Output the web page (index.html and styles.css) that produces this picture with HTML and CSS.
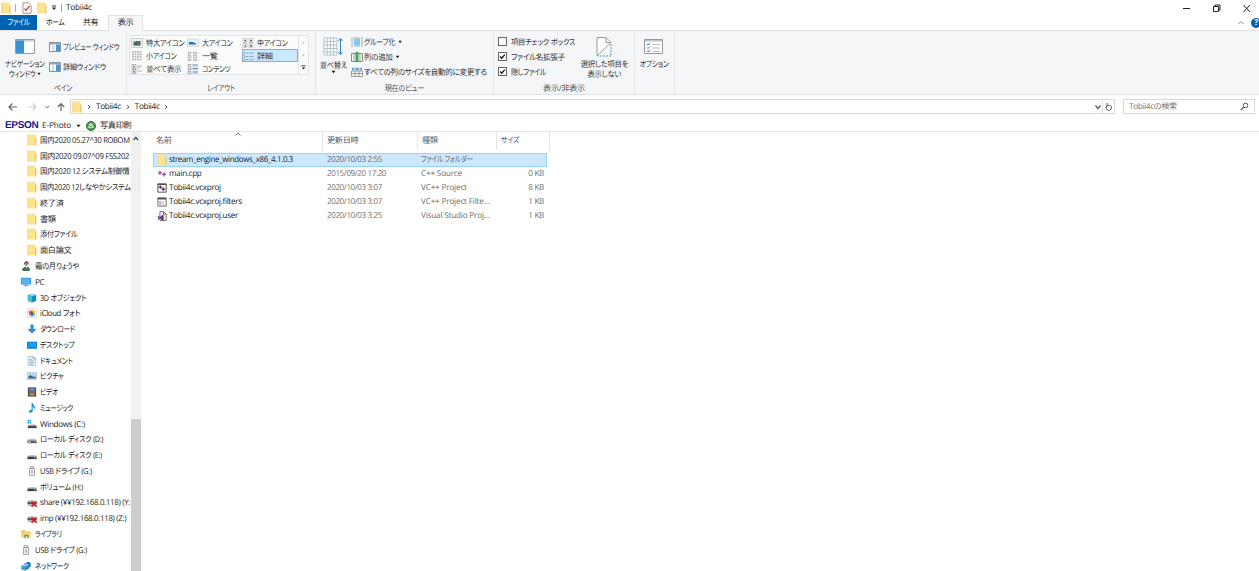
FILE: index.html
```html
<!DOCTYPE html>
<html lang="ja">
<head>
    <meta charset="UTF-8">
    <meta name="viewport" content="width=device-width, initial-scale=1.0">
    <title>Tobii4c</title>
    <link rel="stylesheet" href="styles.css">
</head>
<body>
    <!-- Icon sprites -->
    <svg class="sprites">
        <symbol id="folder" viewBox="0 0 10 12"><path d="M.5.500h8v11h-8z" fill="#fce38f"/><path d="M.5.500h1v11h-1z" fill="#f5d67d"/><path d="M8 3.500h1.500v8H8z" fill="#efc862"/></symbol>
        <symbol id="user" viewBox="0 0 12 12"><circle cx="6.500" cy="3" r="2.600" fill="#5b463a"/><circle cx="6.800" cy="4" r="1.700" fill="#c79a7a"/><path d="M2.500 12V9q1-2.500 4-2.500t4 2.500v3z" fill="#3f7a5a"/><path d="M5.500 6.500h2L6.500 9z" fill="#fff"/><circle cx="3" cy="10" r="1.500" fill="#555"/></symbol>
        <symbol id="pc" viewBox="0 0 12 12"><path d="M0 1h12v8H0z" fill="#2a8ad8"/><path d="M.8 1.800h10.400v6.400H.8z" fill="#55b5f5"/><path d="M5 9h2v1h2v1H3v-1h2z" fill="#7895aa"/></symbol>
        <symbol id="cube" viewBox="0 0 12 12"><path d="M1 2.500 6 1l5 1.500v7L6 11.500 1 9.500z" fill="#148fb0"/><path d="M1 2.500 6 4l5-1.500L6 1z" fill="#91e0ee"/><path d="M1 2.500 6 4v7.500L1 9.500z" fill="#40c0da"/></symbol>
        <symbol id="icloud" viewBox="0 0 12 12"><rect x=".5" y=".5" width="11" height="11" rx="2" fill="#f8f8f8" stroke="#c5c5c5" stroke-width=".6"/><circle cx="6" cy="3.700" r="1.700" fill="#f29a27"/><circle cx="8.200" cy="5" r="1.600" fill="#d8c73a"/><circle cx="8" cy="7.500" r="1.600" fill="#55b27c"/><circle cx="6" cy="8.500" r="1.600" fill="#458bc8"/><circle cx="4" cy="7.500" r="1.600" fill="#9a69aa"/><circle cx="3.800" cy="5" r="1.600" fill="#dc5148"/><circle cx="6" cy="6" r="1.200" fill="#4b3a32"/></symbol>
        <symbol id="down" viewBox="0 0 12 12"><path d="M4.200.5h3.600V6h3.700L6 11.500.5 6h3.700z" fill="#2d8bd9"/></symbol>
        <symbol id="desktop" viewBox="0 0 12 12"><path d="M0 2h12v8.500H0z" fill="#1277c8"/><path d="M.7 2.700h10.600v6.300H.7z" fill="#209aee"/></symbol>
        <symbol id="doc" viewBox="0 0 12 12"><path d="M1.500.5h6l3 3v8h-9z" fill="#edf4f8" stroke="#8eaabc" stroke-width=".8"/><path d="M7.500.5v3h3M3 4h3M3 6h5.500M3 8h5.500M3 9.700h4" fill="none" stroke="#6ca1c5" stroke-width=".9"/></symbol>
        <symbol id="picture" viewBox="0 0 12 12"><path d="M.5 2h11v8H.5z" fill="#eee" stroke="#9fabb3" stroke-width=".8"/><path d="M1.500 3h9v3h-9z" fill="#a9d4ea"/><path d="M1.500 6.500 4 5l3 1.500h3.500V9h-9z" fill="#38688a"/></symbol>
        <symbol id="video" viewBox="0 0 12 12"><path d="M1 .5h10v11H1z" fill="#45474b"/><path d="M3 1.500h6v4H3z" fill="#688ab4"/><path d="M3 6.500h6v4H3z" fill="#aa8751"/><path d="M2 1v10M10 1v10" stroke="#999" stroke-width=".7" stroke-dasharray="1"/></symbol>
        <symbol id="music" viewBox="0 0 12 12"><path d="M5.500 0h1.300q.2 2 2 3.200 2 2 .2 4.800.3-2.500-2.200-3.500V9.500q0 2-2.300 2.300Q2.300 12 2.300 10q.2-2 3.200-2z" fill="#198ddd"/></symbol>
        <symbol id="drive" viewBox="0 0 12 12"><path d="m2 6.200 8-.2 1.500 2H.5z" fill="#bdbdbd"/><path d="M.5 8h11v3H.5z" fill="#3d3f40"/><path d="M8 9.300h2" stroke="#73d673"/></symbol>
        <symbol id="windrive" viewBox="0 0 12 12"><path d="M.5 1h2v2h-2zm2.500 0h2v2H3zM.5 3.500h2v2h-2zm2.500 0h2v2H3z" fill="#26a8e6"/><path d="m2 7 8-.5 1.500 1.800H1z" fill="#aaa"/><path d="M1 8.300h10.500V11H1z" fill="#45484b"/></symbol>
        <symbol id="lockdrive" viewBox="0 0 12 12"><path d="m2 6 8-.2 1.500 2H.5z" fill="#bdbdbd"/><path d="M.5 7.800h11V11H.5z" fill="#555"/><path d="M1.500 8.500h3v3h-3z" fill="#bbb"/><path d="M8 9.300h2" stroke="#73d673"/></symbol>
        <symbol id="usb" viewBox="0 0 12 12"><path d="M4 .6h4V3H4zM3 3h6v8.500H3z" fill="#ececec" stroke="#888" stroke-width=".8"/><path d="M5 5h2v4H5z" fill="#bbb"/></symbol>
        <symbol id="baddrive" viewBox="0 0 12 12"><path d="m1.500 4 8-.2L11.500 6H.5z" fill="#bbb"/><path d="M.5 6h11v2.800H.5z" fill="#58595b"/><path d="M1 10h5" stroke="#52a46c"/><path d="m5.500 5.500 6 6m0-6-6 6" stroke="#d71624" stroke-width="2.100"/></symbol>
        <symbol id="library" viewBox="0 0 12 12"><path d="M.5 1.500h4l1 1.500h6v7H.5z" fill="#eec24d"/><path d="M2 4h9.500v6H2z" fill="#fada77"/><path d="M4 11V7h5v4H7.500V8.500h-2V11z" fill="#3994bd"/></symbol>
        <symbol id="network" viewBox="0 0 12 12"><path d="m3.500 3.500 5-2.500L11.500 2v5l-3 1.500z" fill="#1b6cab"/><path d="m.5 6 5.500-3 4 1v5L5 11.500.5 10z" fill="#2a86c8"/><path d="m.5 6 5.500-3 4 1-5 3z" fill="#8acbed"/><path d="M5 7v4.500L.5 10V6z" fill="#42a3dd"/></symbol>
        <symbol id="cpp" viewBox="0 0 12 12"><path d="M3.500 2v5M1 4.500h5M8.500 4v5M6 6.500h5" stroke="#8a4fa0" stroke-width="1.500"/></symbol>
        <symbol id="proj" viewBox="0 0 12 12"><path d="M1 1h10v10H1z" fill="#fff" stroke="#555" stroke-width="1.200"/><path d="M1 1h10v1.500H1z" fill="#555"/><path d="M4 3v4M2 5h4M7.500 5v4.500M5.300 7.300h4.500" stroke="#4d2f5a" stroke-width="1.400"/></symbol>
        <symbol id="filters" viewBox="0 0 12 12"><path d="M1 1h10v10H1z" fill="#fff" stroke="#555"/><path d="M1 1h10v2H1z" fill="#555"/><path d="M.5 5h5v6h-5z" fill="#cbb4d5"/><path d="M7.500 5v5" stroke="#999"/></symbol>
        <symbol id="vsuser" viewBox="0 0 12 12"><path d="M3.500.7h4.500L11 4v7.300H3.500z" fill="#fff" stroke="#555"/><path d="M7.800 1v3H11" fill="none" stroke="#555"/><path d="m.5 6.500 1-.7 2 1.700 3-3L8 5.200v6l-1.500.6-3-3-2 1.700-1-.7L2 8.200z" fill="#68357d"/></symbol>
        <symbol id="pane" viewBox="0 0 12 10"><path d="M.5.500h11v9H.5z" fill="#fff" stroke="#8a9299"/><path d="M1 1h10v1.500H1z" fill="#99a9b4"/><path d="M7 2.500h4V9H7z" fill="#4298d6"/><path d="M4 3v6" stroke="#9ebccc"/></symbol>
        <symbol id="view" viewBox="0 0 12 10"><path d="M.5.500h11v9H.5z" fill="#f2f2f2" stroke="#ccc"/><path d="M2.500 3h7v4.500h-7z" fill="#2f5f7c"/><path d="M5.500 3h3v4.500h-3z" fill="#547c3e"/><path d="M2.500 3h2v1.500h-2z" fill="#e2b64c"/></symbol>
        <symbol id="largeview" viewBox="0 0 12 10"><path d="M.5 1h11v7.500H.5z" fill="#e2eff6" stroke="#d5dade"/><path d="M2 4h4l3 1.500v1H2z" fill="#1f78b0"/></symbol>
        <symbol id="grid" viewBox="0 0 12 10"><path d="M1 .5h4v4H1zm6 0h4v4H7zM1 5.500h4v4H1zm6 0h4v4H7z" fill="#eee" stroke="#bbb" stroke-width=".7"/><path d="M2.500 2h1.500v1.500H2.500zM8 7h2v1.500H8z" fill="#a6514c"/><path d="M8 2h2v1.500H8zM2.500 7H4v1.500H2.500z" fill="#568253"/></symbol>
        <symbol id="smallview" viewBox="0 0 12 10"><path d="M1 1h10M1 3.500h10M1 6h10M1 8.500h10" stroke="#aaa" stroke-width="1.600" stroke-dasharray="1.800 .8"/></symbol>
        <symbol id="list" viewBox="0 0 12 10"><path d="M1 1h3v2H1zm0 3.500h3v2H1zM1 8h3v1.500H1zm5.500-7h3v2h-3zm0 3.500h3v2h-3zm0 3.500h3v1.500h-3z" fill="#eee" stroke="#999" stroke-width=".6"/></symbol>
        <symbol id="details" viewBox="0 0 12 10"><path d="M.5 1h2v2h-2zm0 3.500h2v2h-2zm0 3.500h2v1.500h-2z" fill="#eee" stroke="#999" stroke-width=".6"/><path d="M3.500 2h3m1 0h4m-8 3.500h3m1 0h4m-8 3h3m1 0h4" stroke="#8296a6" stroke-width=".8"/></symbol>
        <symbol id="tiles" viewBox="0 0 12 10"><path d="M1 .5h4v4H1zm0 5h4v4H1z" fill="#eee" stroke="#999" stroke-width=".7"/><path d="M2 2h1.500v1.500H2z" fill="#568253"/><path d="M2.500 7H4v1.500H2.500z" fill="#3d83b5"/><path d="M6.500 2H11M6.500 4H9M6.500 7H11" stroke="#999" stroke-width=".8"/></symbol>
        <symbol id="contents" viewBox="0 0 12 10"><path d="M1 .5h3v2H1zm0 3.500h3v2H1zm0 3.500h3v2H1z" fill="#d9e9f3" stroke="#999" stroke-width=".7"/><path d="M5.500 1H11M5.500 4.500H11M5.500 8H11" stroke="#4f8cac"/><path d="M5.500 2.500H11M5.500 6H11M5.500 9.500H11" stroke="#bbb" stroke-width=".7"/></symbol>
        <symbol id="check" viewBox="0 0 9 9"><path d="m1.500 4.500 2 2.200L7.500 2" fill="none" stroke="#111" stroke-width="1.700"/></symbol>
        <symbol id="chev" viewBox="0 0 6 6"><path d="m2 1.200 2 1.800-2 1.800" fill="none" stroke="#555"/></symbol>
        <symbol id="tri" viewBox="0 0 6 4"><path d="M.5.500h5L3 3.500z" fill="currentColor"/></symbol>
    </svg>

    <!-- Title bar -->
    <header class="titlebar">
        <svg class="ico folder"><use href="#folder"/></svg>
        <i class="sep"></i>
        <svg class="prop" viewBox="0 0 10 12"><path d="M1 .8h5.500L9 3.300v8H1z" fill="#fff" stroke="#999"/><path d="m2.500 6.500 1.700 2L7.500 4" fill="none" stroke="#d8472b" stroke-width="1.300"/></svg>
        <svg class="ico folder"><use href="#folder"/></svg>
        <svg class="quick" viewBox="0 0 6 6"><path d="M1 1h4" stroke="#333"/><path d="M.7 2.500h4.600L3 5z" fill="#333"/></svg>
        <i class="sep"></i>
        <span class="window-title">Tobii4c</span>
        <svg class="window-btns" viewBox="0 0 76 12"><path d="M4 6.500h7" stroke="#222"/><path d="M34.500 4.500h5v5h-5zM36 4.500V3h5v5h-1.500" fill="none" stroke="#222"/><path d="m64.500 3 6.500 7m0-7-6.500 7" stroke="#222"/></svg>
    </header>

    <nav class="tabs">
        <a class="tab file"><span class="n82">ファイル</span></a>
        <a class="tab home"><span class="n82">ホーム</span></a>
        <a class="tab share">共有</a>
        <a class="tab active">表示</a>
        <svg class="collapse" viewBox="0 0 6 6"><path d="m.5 4 2.500-2.500L5.500 4" fill="none" stroke="#888"/></svg>
        <span class="help">?</span>
    </nav>

    <section class="ribbon">
        <div class="group g-pane">
            <div class="group-body">
                <div class="big-btn nav-btn">
                    <svg class="nav-ico" viewBox="0 0 20 15"><path d="M.5.500h19v14H.5z" fill="#fff" stroke="#969da2"/><path d="M1 1h18v1.500H1z" fill="#c8cdd0"/><path d="M1 1.500h8V14H1z" fill="#3792d4"/></svg>
                    <span class="n80">ナビゲーション<br>ウィンドウ<svg class="tri"><use href="#tri"/></svg></span>
                </div>
                <div class="stack pane-stack">
                    <div class="cmd"><svg class="vico"><use href="#pane"/></svg><span class="n80">プレビュー ウィンドウ</span></div>
                    <div class="cmd"><svg class="vico"><use href="#pane"/></svg><span class="n88">詳細ウィンドウ</span></div>
                </div>
            </div>
            <div class="group-name"><span class="n85">ペイン</span></div>
        </div>
        <div class="group g-layout">
            <div class="gallery">
                <div class="views">
                    <div class="view"><svg class="vico"><use href="#view"/></svg><span class="n88">特大アイコン</span></div>
                    <div class="view"><svg class="vico"><use href="#largeview"/></svg><span class="n85">大アイコン</span></div>
                    <div class="view"><svg class="vico"><use href="#grid"/></svg><span class="n85">中アイコン</span></div>
                    <div class="view"><svg class="vico"><use href="#smallview"/></svg><span class="n85">小アイコン</span></div>
                    <div class="view"><svg class="vico"><use href="#list"/></svg><span>一覧</span></div>
                    <div class="view selected"><svg class="vico"><use href="#details"/></svg><span>詳細</span></div>
                    <div class="view"><svg class="vico"><use href="#tiles"/></svg><span class="n92">並べて表示</span></div>
                    <div class="view"><svg class="vico"><use href="#contents"/></svg><span class="n80">コンテンツ</span></div>
                </div>
                <svg class="gallery-scroll" viewBox="0 0 9 39"><path d="M3 7.500h3L4.500 6zM3 19h3l-1.500 1.500z" fill="#aaa"/><path d="M2.500 30.500h4" stroke="#444"/><path d="M2.500 32h4l-2 2.500z" fill="#444"/></svg>
            </div>
            <div class="group-name"><span class="n82">レイアウト</span></div>
        </div>
        <div class="group g-current">
            <div class="group-body">
                <div class="big-btn sort-btn">
                    <svg class="sort-ico" viewBox="0 0 20 20"><path d="M1 1h13v17H1z" fill="#fff"/><path d="M1 1h13v17H1zM4.300 1v17M7.500 1v17M10.700 1v17M1 4.500h13M1 8h13M1 11.500h13M1 15h13" fill="none" stroke="#b3c2cb"/><path d="M17.500 2v15M15.500 4l2-2.500 2 2.500m-4 11 2 2.500 2-2.500" fill="none" stroke="#3482b8"/></svg>
                    <span class="n88">並べ替え</span>
                    <svg class="tri"><use href="#tri"/></svg>
                </div>
                <div class="stack current-stack">
                    <div class="cmd"><svg class="vico" viewBox="0 0 12 10"><path d="M3 2h6v6H3z" fill="#83c7ef"/><path d="M1 0v10M11 0v10M3 1h6M3 9h6" stroke="#9aa9b4"/></svg><span class="n85">グループ化<svg class="tri"><use href="#tri"/></svg></span></div>
                    <div class="cmd"><svg class="vico" viewBox="0 0 12 10"><path d="M.5 1.500h11v8H.5z" fill="#fff" stroke="#888"/><path d="M3 2v7M9 2v7" stroke="#999"/><path d="M4.500 0h3v10h-3z" fill="#36a853"/></svg><span class="n92">列の追加<svg class="tri"><use href="#tri"/></svg></span></div>
                    <div class="cmd"><svg class="vico" viewBox="0 0 12 10"><path d="M.5 4h11v5.500H.5zM4 4v5.500M8 4v5.500M.5 6.500h11" fill="none" stroke="#888" stroke-width=".8"/><path d="M1 2h10M2.500.5 1 2l1.500 1.500M9.500.5 11 2 9.500 3.500M6 0v4" fill="none" stroke="#3c89bd" stroke-width=".9"/></svg><span class="n92">すべての列のサイズを自動的に変更する</span></div>
                </div>
            </div>
            <div class="group-name"><span class="n88">現在のビュー</span></div>
        </div>
        <div class="group g-show">
            <div class="group-body">
                <div class="stack show-stack">
                    <div class="cmd"><i class="box"></i><span class="n90">項目チェック ボックス</span></div>
                    <div class="cmd"><i class="box"><svg><use href="#check"/></svg></i><span class="n92">ファイル名拡張子</span></div>
                    <div class="cmd"><i class="box"><svg><use href="#check"/></svg></i><span class="n85">隠しファイル</span></div>
                </div>
                <div class="big-btn hide-btn">
                    <svg class="hide-ico" viewBox="0 0 16 20"><path d="M1 19V.5h9l5 5" fill="#fff" stroke="#999"/><path d="M10 .5v5h5M1 19 15 5.500" fill="none" stroke="#999"/><path d="M15 7v12H2" fill="none" stroke="#4d9bd0" stroke-dasharray="2 1"/></svg>
                    <span class="n90">選択した項目を<br>表示しない</span>
                </div>
            </div>
            <div class="group-name">表示/非表示</div>
        </div>
        <div class="group g-option">
            <div class="big-btn">
                <svg class="option-ico" viewBox="0 0 19 15"><path d="M.5.500h18v14H.5z" fill="#fff" stroke="#999"/><path d="M1 1h17v1.500H1z" fill="#bcc4c9"/><path d="m3 5 1 1 2-2M3 8.500l1 1 2-2M3 12l1 1 2-2" fill="none" stroke="#3482b8"/><path d="M8.500 5.500H16M8.500 9H16M8.500 12.500H16" stroke="#bbb"/></svg>
                <span class="n85">オプション</span>
            </div>
        </div>
    </section>

    <!-- Address bar -->
    <div class="address-row">
        <svg class="nav-arrows" viewBox="0 0 70 14"><path d="M17 7H9m3.500-3.500L9 7l3.500 3.500" fill="none" stroke="#666" stroke-width="1.200"/><path d="M28 7h8m-3.500-3.500L36 7l-3.500 3.500" fill="none" stroke="#ccc" stroke-width="1.200"/><path d="m45.500 6 1.700 2L48.900 6" fill="none" stroke="#777"/><path d="M61 11V3.500M57.700 7 61 3.500 64.300 7" fill="none" stroke="#666" stroke-width="1.200"/></svg>
        <div class="address">
            <svg class="ico folder"><use href="#folder"/></svg>
            <svg class="crumb-sep"><use href="#chev"/></svg>
            <span>Tobii4c</span>
            <svg class="crumb-sep"><use href="#chev"/></svg>
            <span>Tobii4c</span>
            <svg class="crumb-sep"><use href="#chev"/></svg>
            <svg class="addr-tools" viewBox="0 0 22 14"><path d="m3.500 5.500 2.500 3 2.500-3" fill="none" stroke="#555" stroke-width="1.200"/><path d="M10.500 0v14" stroke="#ddd"/><path d="M14.700 6a2.700 2.700 0 1 0 3.300-.8M15 3v2.500h2.500" fill="none" stroke="#555"/></svg>
        </div>
        <div class="search">
            <span>Tobii4cの検索</span>
            <svg viewBox="0 0 9 9"><circle cx="5.500" cy="3.500" r="2.300" fill="none" stroke="#555"/><path d="M3.800 5.200 1 8" stroke="#555" stroke-width="1.200"/></svg>
        </div>
    </div>

    <div class="epson-bar">
        <b>EPSON</b>
        <span class="ephoto">E-Photo</span>
        <svg class="tri"><use href="#tri"/></svg>
        <svg class="print" viewBox="0 0 10 10"><circle cx="5" cy="5" r="4.500" fill="#4c9b51" stroke="#326f39"/><path d="M2.500 4.500h5v2.500h-5zM3.500 2.500h3v2h-3z" fill="#d8eed6"/><circle cx="5" cy="5.500" r="1" fill="#4c9b51"/></svg>
        <span>写真印刷</span>
    </div>

    <main class="content">
        <ul class="tree">
            <li class="sub"><svg class="ico"><use href="#folder"/></svg><span class="n92">国内2020 05.27^30 ROBOM</span></li>
            <li class="sub"><svg class="ico"><use href="#folder"/></svg><span class="n95">国内2020 09.07^09 FSS202</span></li>
            <li class="sub"><svg class="ico"><use href="#folder"/></svg><span class="n92">国内2020 12 システム制御情</span></li>
            <li class="sub"><svg class="ico"><use href="#folder"/></svg><span class="n90">国内2020 12しなやかシステム</span></li>
            <li class="sub"><svg class="ico"><use href="#folder"/></svg><span>終了済</span></li>
            <li class="sub"><svg class="ico"><use href="#folder"/></svg><span>書類</span></li>
            <li class="sub"><svg class="ico"><use href="#folder"/></svg><span class="n88">添付ファイル</span></li>
            <li class="sub"><svg class="ico"><use href="#folder"/></svg><span>面白論文</span></li>
            <li><svg class="ico"><use href="#user"/></svg><span class="n90">霜の月りょうや</span></li>
            <li><svg class="ico"><use href="#pc"/></svg><span>PC</span></li>
            <li class="sub"><svg class="ico"><use href="#cube"/></svg><span class="n88">3D オブジェクト</span></li>
            <li class="sub"><svg class="ico"><use href="#icloud"/></svg><span class="n95">iCloud フォト</span></li>
            <li class="sub"><svg class="ico"><use href="#down"/></svg><span class="n82">ダウンロード</span></li>
            <li class="sub"><svg class="ico"><use href="#desktop"/></svg><span class="n85">デスクトップ</span></li>
            <li class="sub"><svg class="ico"><use href="#doc"/></svg><span class="n82">ドキュメント</span></li>
            <li class="sub"><svg class="ico"><use href="#picture"/></svg><span class="n85">ピクチャ</span></li>
            <li class="sub"><svg class="ico"><use href="#video"/></svg><span class="n82">ビデオ</span></li>
            <li class="sub"><svg class="ico"><use href="#music"/></svg><span class="n80">ミュージック</span></li>
            <li class="sub"><svg class="ico"><use href="#windrive"/></svg><span>Windows (C:)</span></li>
            <li class="sub"><svg class="ico"><use href="#lockdrive"/></svg><span class="n88">ローカル ディスク (D:)</span></li>
            <li class="sub"><svg class="ico"><use href="#drive"/></svg><span class="n88">ローカル ディスク (E:)</span></li>
            <li class="sub"><svg class="ico"><use href="#usb"/></svg><span class="n92">USB ドライブ (G:)</span></li>
            <li class="sub"><svg class="ico"><use href="#drive"/></svg><span class="n88">ボリューム (H:)</span></li>
            <li class="sub"><svg class="ico"><use href="#baddrive"/></svg><span class="n97">share (¥¥192.168.0.118) (Y:</span></li>
            <li class="sub"><svg class="ico"><use href="#baddrive"/></svg><span class="n97">imp (¥¥192.168.0.118) (Z:)</span></li>
            <li><svg class="ico"><use href="#library"/></svg><span class="n80">ライブラリ</span></li>
            <li><svg class="ico"><use href="#usb"/></svg><span class="n92">USB ドライブ (G:)</span></li>
            <li><svg class="ico"><use href="#network"/></svg><span class="n82">ネットワーク</span></li>
        </ul>
        <div class="scrollbar">
            <svg viewBox="0 0 10 12"><path d="m2.500 8 2.300-2.500L7.100 8" fill="none" stroke="#444" stroke-width="1.200"/></svg>
            <div class="thumb"></div>
        </div>
        <div class="files">
            <div class="row head">
                <span class="name">名前<svg class="sort-mark" viewBox="0 0 6 4"><path d="M.5 3.500 3 1l2.500 2.500" fill="none" stroke="#777"/></svg></span>
                <span>更新日時</span><span>種類</span><span><span class="n85">サイズ</span></span>
            </div>
            <div class="row selected"><span class="name"><svg class="ico"><use href="#folder"/></svg><span class="n97">stream_engine_windows_x86_4.1.0.3</span></span><span><span class="n97">2020/10/03 2:55</span></span><span><span class="n82">ファイル フォルダー</span></span><span class="size"></span></div>
            <div class="row"><span class="name"><svg class="ico"><use href="#cpp"/></svg><span>main.cpp</span></span><span><span class="n97">2015/09/20 17:20</span></span><span class="type">C++ Source</span><span class="size">0 KB</span></div>
            <div class="row"><span class="name"><svg class="ico"><use href="#proj"/></svg><span>Tobii4c.vcxproj</span></span><span><span class="n97">2020/10/03 3:07</span></span><span class="type">VC++ Project</span><span class="size">8 KB</span></div>
            <div class="row"><span class="name"><svg class="ico"><use href="#filters"/></svg><span>Tobii4c.vcxproj.filters</span></span><span><span class="n97">2020/10/03 3:07</span></span><span class="type">VC++ Project Filte...</span><span class="size">1 KB</span></div>
            <div class="row"><span class="name"><svg class="ico"><use href="#vsuser"/></svg><span>Tobii4c.vcxproj.user</span></span><span><span class="n97">2020/10/03 3:25</span></span><span class="type">Visual Studio Proj...</span><span class="size">1 KB</span></div>
        </div>
    </main>
</body>
</html>
```
FILE: styles.css
```css
:root {
    --ribbon-bg: #f5f6f7;
    --line: #dfe1e3;
    --text: #222;
    --accent: #0063b1;
    --select: #cce8ff;
}

* {
    box-sizing: border-box;
    margin: 0;
    padding: 0;
}

body {
    display: flex;
    flex-direction: column;
    height: 571px;
    overflow: hidden;
    font-family: "Open Sans", "Noto Sans CJK JP", sans-serif;
    font-size: 8.2px;
    font-feature-settings: "palt";
    letter-spacing: -0.35px;
    line-height: 10px;
    text-rendering: geometricPrecision;
    color: var(--text);
    background: #fff;
    white-space: nowrap;
}

svg {
    display: block;
    flex: none;
}

.sprites {
    display: none;
}

/* condensed labels */
.n80, .n82, .n85, .n88, .n90, .n92, .n95, .n97 {
    display: inline-block;
    transform-origin: left center;
}

.n80 { transform: scaleX(0.8); }
.n82 { transform: scaleX(0.82); }
.n85 { transform: scaleX(0.85); }
.n88 { transform: scaleX(0.88); }
.n90 { transform: scaleX(0.9); }
.n92 { transform: scaleX(0.92); }
.n95 { transform: scaleX(0.95); }
.n97 { transform: scaleX(0.97); }

.tab span,
.big-btn span,
.group-name span {
    transform-origin: center;
}

.ico {
    width: 10px;
    height: 12px;
}

.vico {
    width: 12px;
    height: 10px;
}

.tri {
    display: inline-block;
    width: 5px;
    height: 4px;
    color: #222;
}

/* title bar and tabs */
.titlebar {
    display: flex;
    align-items: center;
    height: 15px;
    padding-left: 1px;
}

.sep {
    width: 1px;
    height: 8px;
    margin: 0 6px 0 4px;
    background: #aaa;
}

.prop {
    width: 10px;
    height: 12px;
    margin-right: 5px;
}

.quick {
    width: 6px;
    height: 6px;
    margin-left: 4px;
}

.titlebar .quick + .sep {
    margin-right: 4px;
}

.window-title {
    letter-spacing: -0.2px;
}

.window-btns {
    width: 76px;
    height: 12px;
    margin-left: auto;
    margin-right: 4px;
}

.tabs {
    display: flex;
    align-items: center;
    height: 16px;
    border-bottom: 1px solid var(--line);
}

.tab {
    height: 16px;
    line-height: 15px;
    text-align: center;
}

.file {
    width: 37px;
    height: 15px;
    background: var(--accent);
    color: #fff;
    align-self: flex-start;
}

.home {
    width: 36px;
}

.share {
    width: 35px;
}

.active {
    width: 35px;
    border: 1px solid var(--line);
    border-bottom: none;
    line-height: 13px;
    background: var(--ribbon-bg);
}

.collapse {
    width: 6px;
    height: 6px;
    margin: 0 7px 0 auto;
}

.help {
    width: 10px;
    height: 10px;
    margin-right: -2px;
    border-radius: 50%;
    background: var(--accent);
    color: #fff;
    font-weight: bold;
    text-align: center;
}

/* ribbon */
.ribbon {
    display: flex;
    height: 64px;
    background: var(--ribbon-bg);
    border-bottom: 1px solid var(--line);
    color: #333;
}

.group {
    display: flex;
    flex-direction: column;
    justify-content: space-between;
    border-right: 1px solid #e3e4e6;
}

.group-body {
    display: flex;
}

.group-name {
    height: 10px;
    color: #555;
    text-align: center;
}

.big-btn {
    display: flex;
    flex-direction: column;
    align-items: center;
    text-align: center;
}

.stack {
    display: flex;
    flex-direction: column;
}

.cmd {
    display: flex;
    align-items: center;
    gap: 2px;
    height: 15px;
}

.cmd > span,
.view > span,
.tree li > span {
    padding-top: 2px;
}

.g-pane {
    width: 127px;
}

.nav-btn {
    width: 49px;
    padding-top: 8px;
}

.nav-ico {
    width: 20px;
    height: 15px;
    margin-bottom: 6px;
}

.nav-btn .tri {
    margin-left: 2px;
    vertical-align: 1px;
}

.pane-stack {
    gap: 5px;
    padding-top: 8px;
}

.g-layout {
    width: 189px;
}

.gallery {
    display: flex;
    width: 180px;
    height: 40px;
    margin: 4px 0 0 2px;
    border: 1px solid #e1e3e5;
    background: #fafbfb;
}

.views {
    display: grid;
    grid-template-columns: 56px 55px 56px;
    grid-template-rows: repeat(3, 13px);
    padding-left: 1px;
}

.view {
    display: flex;
    align-items: center;
    gap: 3px;
}

.view.selected {
    background: var(--select);
    outline: 1px solid #84acdd;
    outline-offset: -1px;
}

.gallery-scroll {
    width: 10px;
    height: 38px;
    border-left: 1px solid #e1e3e5;
}

.g-current {
    width: 178px;
}

.sort-btn {
    width: 35px;
    padding-top: 6px;
    margin: 0 -1px 0 2px;
}

.sort-ico {
    width: 20px;
    height: 20px;
    margin-bottom: 4px;
}

.sort-btn > .tri {
    margin-top: -1px;
}

.current-stack,
.show-stack {
    padding-top: 3px;
}

.current-stack {
    padding-left: 3px;
}

.current-stack .cmd {
    gap: 1px;
}

.current-stack .tri {
    margin-left: 3px;
    vertical-align: 1px;
}

.g-show {
    width: 141px;
}

.show-stack {
    width: 81px;
    padding-left: 4px;
}

.box {
    width: 9px;
    height: 9px;
    margin-right: 2px;
    border: 1px solid #666;
    background: #fff;
    flex: none;
}

.box svg {
    width: 7px;
    height: 7px;
}

.hide-btn {
    width: 58px;
    padding-top: 6px;
}

.hide-ico {
    width: 16px;
    height: 20px;
    margin-bottom: 3px;
}

.g-option {
    width: 40px;
}

.option-ico {
    width: 19px;
    height: 15px;
    margin: 8px 2px 6px 0;
}

/* address bar */
.address-row {
    display: flex;
    align-items: center;
    height: 22px;
    padding-top: 1px;
}

.nav-arrows {
    width: 70px;
    height: 14px;
}

.address,
.search {
    display: flex;
    align-items: center;
    height: 15px;
    border: 1px solid #d9d9d9;
}

.address {
    width: 1045px;
    padding-left: 1px;
}

.crumb-sep {
    width: 6px;
    height: 6px;
    margin: 0 4px;
}

.addr-tools {
    width: 22px;
    height: 14px;
    margin-left: auto;
}

.search {
    width: 132px;
    margin-left: 8px;
    padding: 0 5px;
    justify-content: space-between;
    color: #767676;
}

.search svg {
    width: 9px;
    height: 9px;
}

.epson-bar {
    display: flex;
    align-items: center;
    height: 15px;
    padding: 3px 0 0 5px;
    border-bottom: 1px solid #e4e4e4;
}

.epson-bar b {
    width: 37px;
    color: #10218b;
    font-family: "Liberation Sans", sans-serif;
    font-size: 10px;
    letter-spacing: -0.3px;
}

.ephoto {
    width: 34px;
    letter-spacing: -0.1px;
}

.print {
    width: 10px;
    height: 10px;
    margin: 0 4px 0 5px;
}

/* folder tree */
.content {
    display: flex;
    flex: 1;
    min-height: 0;
}

.tree {
    width: 131px;
    overflow: hidden;
    list-style: none;
}

.tree li {
    display: flex;
    align-items: center;
    gap: 4px;
    height: 15.78px;
    padding-left: 21px;
}

.tree .sub {
    gap: 3px;
    padding-left: 27px;
}

.scrollbar {
    display: flex;
    flex-direction: column;
    justify-content: space-between;
    width: 10px;
    background: #f0f0f0;
}

.scrollbar svg {
    width: 10px;
    height: 12px;
}

.thumb {
    height: 152px;
    background: #cdcdcd;
}

/* file list */
.files {
    width: 409px;
    padding-left: 12px;
}

.row {
    display: grid;
    grid-template-columns: 170px 94px 80px 50px;
    align-items: center;
    width: 394px;
    height: 13.8px;
    color: #6d6d6d;
}

.row > span {
    padding: 1px 0 0 4px;
}

.row .name {
    display: flex;
    align-items: center;
    gap: 2px;
    color: var(--text);
}

.row .type {
    letter-spacing: -0.2px;
}

.row .size {
    padding-right: 3px;
    text-align: right;
}

.row.selected {
    background: var(--select);
    outline: 1px solid #99d1ff;
    outline-offset: -1px;
}

.row.head {
    width: 397px;
    height: 18px;
    margin-bottom: 3px;
    grid-template-columns: 170px 95px 79px 53px;
    align-items: stretch;
}

.row.head > span {
    border-right: 1px solid #e5e5e5;
    padding: 0 0 0 3px;
    line-height: 17px;
    color: #4c607a;
}

.row.head > span + span {
    padding-left: 4px;
}

.row.head .name {
    align-items: flex-start;
}

.sort-mark {
    width: 6px;
    height: 4px;
    margin-left: 61px;
}
```
